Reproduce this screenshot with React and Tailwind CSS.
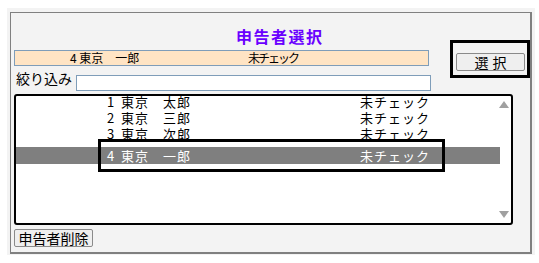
import React from 'react';

const jp = { fontFamily: '"Noto Sans CJK JP", "Noto Sans", sans-serif' };

const rows = [
  { no: 1, name: '東京　太郎', status: '未チェック' },
  { no: 2, name: '東京　三郎', status: '未チェック' },
  { no: 3, name: '東京　次郎', status: '未チェック' },
];

const Row = ({ no, name, status, selected }) => (
  <div
    className={`flex items-center text-[13px] leading-[16px] tracking-[1px] whitespace-nowrap ${
      selected ? 'bg-[#7f7f7f] text-white h-[17px]' : 'text-black h-[16px]'
    }`}
  >
    <span className="w-[91px] shrink-0" />
    <span className="w-[14px] shrink-0">{no}</span>
    <span className="w-[239px] shrink-0">{name}</span>
    <span>{status}</span>
  </div>
);

export default function App() {
  return (
    <div className="w-[539px] h-[263px] bg-white pt-[8px] pl-[7px]" style={jp}>
      <div className="w-[528px] h-[247px] bg-[#f3f3f3] pt-[4px] pl-[3px]">
        <div className="w-[522px] h-[242px] border-l border-t border-r-2 border-b-2 border-[#808080] pl-[3px]">
          {/* Title */}
          <div className="h-[27px] pt-[15px] pl-[222px]">
            <div className="text-[16px] leading-[16px] font-bold text-[#6a00ff] tracking-[1.5px] whitespace-nowrap">
              申告者選択
            </div>
          </div>

          {/* Header row */}
          <div className="flex">
            <div className="w-[436px] pt-[10px]">
              <div className="w-[415px] h-[16px] bg-[#ffe4c4] border border-[#7f9db9] flex items-center text-[12px] leading-[14px] text-black whitespace-nowrap">
                <span className="w-[55px] shrink-0" />
                <span className="w-[178px] shrink-0">4 東京　一郎</span>
                <span className="tracking-[-2px]">未チェック</span>
              </div>
              <div className="flex items-start mt-[4px] h-[21px]">
                <span className="pl-[2px] w-[62px] text-[14px] leading-[17px] text-black whitespace-nowrap">絞り込み</span>
                <input className="mt-[5px] w-[355px] h-[16px] bg-white border border-[#7f9db9] outline-none" />
              </div>
            </div>
            <div className="w-[80px] h-[38px] border-[3px] border-black pt-[6px] pl-[3px]">
              <button className="w-[69px] h-[18px] bg-[#efefef] border border-[#8a8a8a] rounded-[2px] text-[14px] leading-[16px] text-black tracking-[4px] pl-[4px]">
                選択
              </button>
            </div>
          </div>

          {/* List */}
          <div className="relative mt-[3px] w-[499px] h-[131px] bg-white border-2 border-black rounded-[3px]">
            <div className="h-full overflow-hidden">
              <div className="mt-[-2px] w-[484px]">
                {rows.map((r) => (
                  <Row key={r.no} {...r} />
                ))}
                <div className="h-[5px]" />
                <Row no={4} name="東京　一郎" status="未チェック" selected />
              </div>
            </div>
            <div className="absolute right-[2px] top-[5px] w-0 h-0 border-l-[5px] border-r-[5px] border-b-[7px] border-l-transparent border-r-transparent border-b-[#a0a0a0]" />
            <div className="absolute right-[2px] bottom-[5px] w-0 h-0 border-l-[5px] border-r-[5px] border-t-[7px] border-l-transparent border-r-transparent border-t-[#a0a0a0]" />
            <div className="absolute left-[82px] top-[43px] w-[347px] h-[33px] border-[3px] border-black" />
          </div>

          {/* Delete button */}
          <button className="mt-[3px] w-[79px] h-[18px] bg-[#efefef] border border-[#8a8a8a] rounded-[2px] text-[14px] leading-[16px] text-black whitespace-nowrap">
            申告者削除
          </button>
        </div>
      </div>
    </div>
  );
}
